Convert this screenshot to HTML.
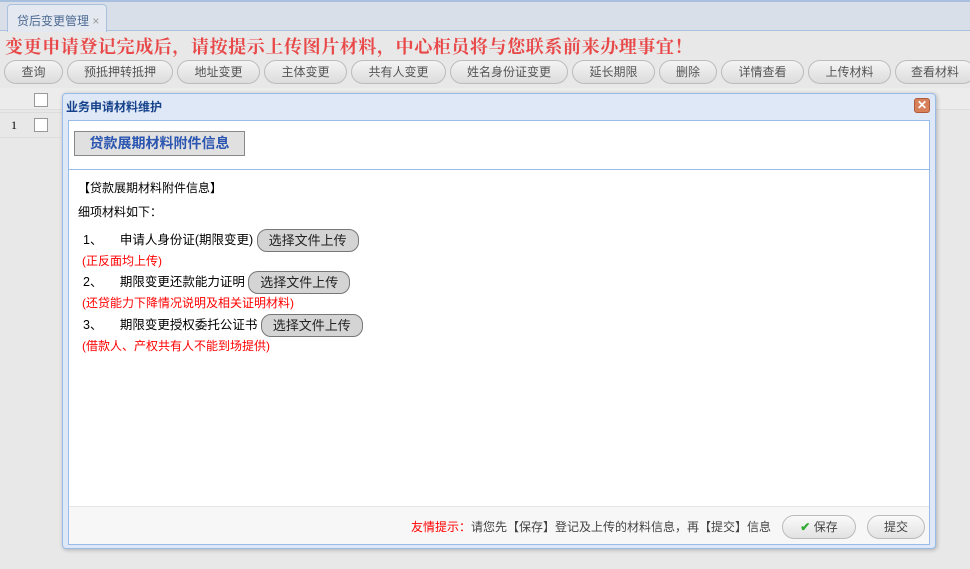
<!DOCTYPE html>
<html><head><meta charset="utf-8"><style>
*{margin:0;padding:0;box-sizing:border-box}
body{width:970px;height:569px;overflow:hidden;background:#e8e8e8;font-family:"Liberation Sans","Noto Sans CJK SC",sans-serif;font-size:12px;position:relative}
.a{position:absolute}
.tb{left:0;top:0;width:970px;height:31px;background:#d9dfe9;border-top:2px solid #a8c0de;border-bottom:1px solid #a9c1df}
.tab{left:7px;top:4px;width:100px;height:28px;background:#e4e9f1;border:1px solid #a9c1df;border-bottom:none;border-radius:4px 4px 0 0;color:#4e6a92;font-size:12px;padding:7px 0 0 9px}
.title{left:5px;top:33px;color:#e84848;font-family:"Liberation Serif","Noto Serif CJK SC",serif;font-weight:bold;font-size:18px;letter-spacing:0.6px}
.btn{top:60px;height:24px;border:1px solid #bcbcbc;border-radius:12px;background:linear-gradient(#f4f4f4,#dcdcdc);color:#555;font-size:12px;text-align:center;line-height:22px}
.grid{left:0;top:88px;width:970px;height:22px;background:#ececec;border-bottom:1px solid #ddd}
.cb{width:14px;height:14px;border:1px solid #999;background:#fff}
.dlg{left:62px;top:93px;width:874px;height:456px;background:#dfe8f6;border:1px solid #99bbe8;border-radius:4px;box-shadow:1px 1px 4px rgba(0,0,0,.25)}
.inner{left:68px;top:120px;width:862px;height:425px;background:#fff;border:1px solid #99bbe8}
.hdr{left:0;top:0;width:860px;height:49px;border-bottom:1px solid #99bbe8}
.hbtn{left:5px;top:10px;width:171px;height:25px;background:#e0e0e0;border:1px solid #888;color:#2a55b0;font-weight:bold;font-size:14px;text-align:center;line-height:23px}
.up{display:inline-block;height:23px;border:1px solid #777;border-radius:10px;background:#d4d4d4;padding:0 11px;line-height:21px;font-size:13px;color:#222;vertical-align:middle}
.red{color:#f00}
.foot{left:0;top:385px;width:860px;height:38px;background:#f7f7f7;border-top:1px solid #e6e6e6}
.fb{top:8px;height:24px;border:1px solid #bbb;border-radius:12px;background:linear-gradient(#fafafa,#e2e2e2);text-align:center;line-height:22px;color:#444}
</style></head><body>
<div class="a tb"></div>
<div class="a tab">贷后变更管理 <span style="color:#999">×</span></div>
<div class="a title">变更申请登记完成后，请按提示上传图片材料，中心柜员将与您联系前来办理事宜！</div>
<div class="a btn" style="left:4px;width:59px">查询</div>
<div class="a btn" style="left:67px;width:106px">预抵押转抵押</div>
<div class="a btn" style="left:177px;width:83px">地址变更</div>
<div class="a btn" style="left:264px;width:83px">主体变更</div>
<div class="a btn" style="left:351px;width:95px">共有人变更</div>
<div class="a btn" style="left:450px;width:118px">姓名身份证变更</div>
<div class="a btn" style="left:572px;width:83px">延长期限</div>
<div class="a btn" style="left:659px;width:58px">删除</div>
<div class="a btn" style="left:721px;width:83px">详情查看</div>
<div class="a btn" style="left:808px;width:83px">上传材料</div>
<div class="a btn" style="left:895px;width:80px">查看材料</div>
<div class="a grid"></div>
<div class="a cb" style="left:34px;top:93px"></div>
<div class="a" style="left:11px;top:118px;font-family:'Liberation Serif',serif;font-size:12px">1</div>
<div class="a cb" style="left:34px;top:118px"></div>
<div class="a" style="left:0;top:112px;width:62px;height:1px;background:#ddd"></div>
<div class="a" style="left:0;top:137px;width:62px;height:1px;background:#ddd"></div>
<div class="a dlg"></div>
<div class="a" style="left:66px;top:98px;color:#15428b;font-weight:bold;font-size:12px">业务申请材料维护</div>
<div class="a" style="left:914px;top:98px;width:16px;height:15px;background:#d8805a;border:1px solid #b05a3a;border-radius:3px;color:#fff;font-size:12px;font-weight:bold;text-align:center;line-height:13px">✕</div>
<div class="a inner">
 <div class="a hdr"><div class="a hbtn">贷款展期材料附件信息</div></div>
 <div class="a" style="left:9px;top:58px;font-size:12px">【贷款展期材料附件信息】</div>
 <div class="a" style="left:9px;top:82px;font-size:12px">细项材料如下：</div>
 <div class="a" style="left:14px;top:108px;font-size:12.5px">1、&nbsp;&nbsp;&nbsp;&nbsp;&nbsp;申请人身份证(期限变更) <span class="up">选择文件上传</span></div>
 <div class="a red" style="left:13px;top:131px">(正反面均上传)</div>
 <div class="a" style="left:14px;top:150px;font-size:12.5px">2、&nbsp;&nbsp;&nbsp;&nbsp;&nbsp;期限变更还款能力证明 <span class="up">选择文件上传</span></div>
 <div class="a red" style="left:13px;top:173px">(还贷能力下降情况说明及相关证明材料)</div>
 <div class="a" style="left:14px;top:193px;font-size:12.5px">3、&nbsp;&nbsp;&nbsp;&nbsp;&nbsp;期限变更授权委托公证书 <span class="up">选择文件上传</span></div>
 <div class="a red" style="left:13px;top:216px">(借款人、产权共有人不能到场提供)</div>
 <div class="a foot">
  <div class="a" style="left:342px;top:11px;font-size:12px;color:#444"><span class="red">友情提示：</span>请您先【保存】登记及上传的材料信息，再【提交】信息</div>
  <div class="a fb" style="left:713px;width:74px"><span style="color:#3a3;font-weight:bold">✔</span> 保存</div>
  <div class="a fb" style="left:798px;width:58px">提交</div>
 </div>
</div>
</body></html>
